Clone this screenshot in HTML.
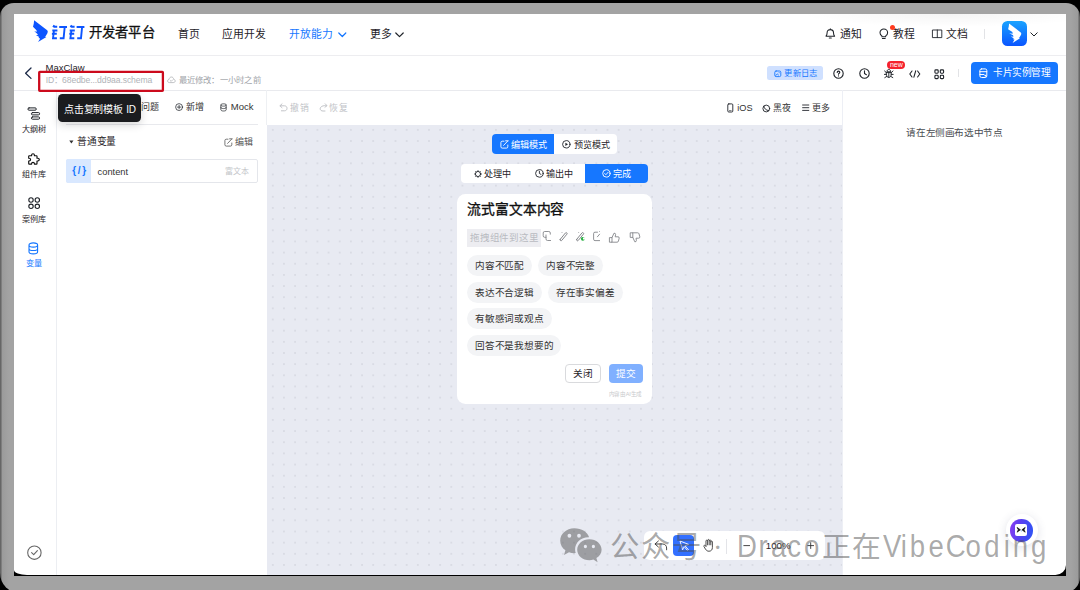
<!DOCTYPE html>
<html lang="zh-CN">
<head>
<meta charset="utf-8">
<title>钉钉开发者平台</title>
<style>
*{box-sizing:border-box;margin:0;padding:0}
html,body{width:1080px;height:590px;overflow:hidden;background:#000;font-family:"Liberation Sans",sans-serif;color:#1f2329}
#bezel{position:absolute;left:0;top:3.3px;width:1080px;height:590px;background:linear-gradient(90deg,#606060 0,#6c6c6c 1px,#9b9b9b 2.3px,#a3a3a3 9px,#a3a3a3 calc(100% - 9px),#9b9b9b calc(100% - 2.3px),#6c6c6c calc(100% - 1px),#606060 100%);border-radius:14px 14px 16px 20px}
#blk{position:absolute;left:14px;top:14px;width:1052px;height:562px;background:#000}
#screen{position:absolute;left:14px;top:14px;width:1052px;height:561px;background:#fff;border-radius:0 0 10.5px 13px/0 0 10px 5px;overflow:hidden}
#pg{position:absolute;left:-14px;top:-14px;width:1080px;height:590px}
#pg div,#pg span,#pg svg{position:absolute}
.t{white-space:nowrap;line-height:1}
.hl{background:#ececee;height:1px}
svg{overflow:visible}
.ic{fill:none;stroke:#1f2329;stroke-width:1;stroke-linecap:round;stroke-linejoin:round}
#canvas{left:267px;top:124.6px;width:575px;height:451px;background-color:#e8eaf2;
 background-image:radial-gradient(circle,#ccced7 0.45px,rgba(204,206,215,0) 0.9px);background-size:11.169px 11.163px;background-position:0.22px -0.72px}
.chip{height:21px;border-radius:10.5px;background:#f3f4f6;font-size:9.6px;letter-spacing:-0.2px;line-height:21px;padding:0 8.1px;color:#333;white-space:nowrap}
</style>
</head>
<body>
<div id="bezel"></div>
<div id="blk"></div>
<div id="screen"><div id="pg">
<div style="left:760px;top:14px;width:306px;height:16px;background:radial-gradient(ellipse 150px 13px at 62% 0,rgba(0,0,0,0.045),rgba(0,0,0,0))"></div>
<div class="hl" style="left:14px;top:54.5px;width:1052px;background:#ededf0"></div>
<svg style="left:0;top:0" width="1080" height="60">
  <path d="M34.1,20.3 L47.2,30.3 Q48.3,31.5 47.4,33.2 L45.6,36.2 L44.6,36.5 L46.4,36.9 L38,42.1 L40.2,38.4 L38.5,38.1 L39.2,37 L35.9,35 L37.8,35.1 L37.5,34 L34.3,31.2 L36.8,31.7 L36.5,30.2 L33,26.7 L33.8,23.5 Z" fill="#0d55ff"/>
</svg>
<svg style="left:0;top:0" width="100" height="60" aria-label="钉钉"><g fill="none" stroke="#0d55ff" stroke-width="1.9" stroke-linejoin="miter">
<path d="M54.4,25.2 L53.2,27.2 M53.6,26.8 L57.2,26.8 M52.3,30.5 L57.4,30.5 M51.9,33.8 L56.8,33.8 M54,30.5 L53,38.2 L56.9,38.2 M59.2,27 L67,27 M64.7,27 L63.6,38.2 L59.8,38.2"/><g transform="translate(17.4,0)"><path d="M54.4,25.2 L53.2,27.2 M53.6,26.8 L57.2,26.8 M52.3,30.5 L57.4,30.5 M51.9,33.8 L56.8,33.8 M54,30.5 L53,38.2 L56.9,38.2 M59.2,27 L67,27 M64.7,27 L63.6,38.2 L59.8,38.2"/></g></g></svg>
<span class="t" style="left:88.5px;top:26.3px;font-size:13.3px;letter-spacing:0.3px;font-weight:500;-webkit-text-stroke:0.3px #111;color:#111">开发者平台</span>
<span class="t" style="left:177.6px;top:29px;font-size:10.8px;color:#1f2329">首页</span>
<span class="t" style="left:222px;top:29px;font-size:10.8px;color:#1f2329">应用开发</span>
<span class="t" style="left:289px;top:29px;font-size:10.8px;color:#1677ff">开放能力</span>
<svg style="left:338px;top:31.5px" width="9" height="6"><path class="ic" d="M0.8,1 L4.3,4.5 L7.8,1" style="stroke:#1677ff;stroke-width:1.2"/></svg>
<span class="t" style="left:369.5px;top:29px;font-size:10.8px;color:#1f2329">更多</span>
<svg style="left:395px;top:31.5px" width="10" height="6"><path class="ic" d="M0.8,1 L4.5,4.6 L8.2,1" style="stroke-width:1.2"/></svg>
<!-- right nav -->
<svg style="left:825.3px;top:27.9px" width="11" height="12"><path class="ic" d="M1,8.2 L9.6,8.2 C8.6,7.2 8.5,6.2 8.5,4.8 C8.5,2.8 7.2,1.6 5.3,1.6 C3.4,1.6 2.1,2.8 2.1,4.8 C2.1,6.2 2,7.2 1,8.2 Z M4.3,10 L6.3,10 M5.3,0.7 L5.3,1.5" style="stroke-width:1.05"/></svg>
<span class="t" style="left:839.5px;top:29px;font-size:10.8px">通知</span>
<svg style="left:879.2px;top:27.6px" width="10" height="12"><path class="ic" d="M4.8,1 C2.6,1 1,2.6 1,4.7 C1,6 1.7,7.2 2.9,7.9 L2.9,8.8 L6.7,8.8 L6.7,7.9 C7.9,7.2 8.6,6 8.6,4.7 C8.6,2.6 7,1 4.8,1 Z M3.4,10.4 L6.2,10.4" style="stroke-width:1.05"/></svg>
<div style="left:890px;top:24.6px;width:5px;height:5px;border-radius:50%;background:#ff3b1f"></div>
<span class="t" style="left:893px;top:29px;font-size:10.8px">教程</span>
<svg style="left:931.5px;top:29px" width="11" height="10"><path class="ic" d="M0.8,1 L9.8,1 L9.8,8.6 L0.8,8.6 Z M5.3,1 L5.3,8.6" style="stroke-width:0.9"/></svg>
<span class="t" style="left:945.7px;top:29px;font-size:10.8px">文档</span>
<div style="left:984px;top:28.5px;width:1px;height:10px;background:#e2e3e6"></div>
<div style="left:1002px;top:21px;width:25px;height:25px;border-radius:5.5px;background:linear-gradient(180deg,#1aa3ff 0%,#0a55ff 100%)"></div>
<svg style="left:1002px;top:21px" width="25" height="25"><path transform="translate(-23.27,-15.57) scale(0.89)" d="M34.1,20.3 L47.2,30.3 Q48.3,31.5 47.4,33.2 L45.6,36.2 L44.6,36.5 L46.4,36.9 L38,42.1 L40.2,38.4 L38.5,38.1 L39.4,36.9 L35.9,35 L39,35.2 L38.6,33.6 L34.3,31.2 L38.2,31.9 L37.8,29.8 L33,26.7 L33.8,23.5 Z" fill="#fff"/></svg>
<svg style="left:1030px;top:31.5px" width="9" height="6"><path class="ic" d="M0.8,0.8 L4,4 L7.2,0.8" style="stroke-width:1"/></svg>

<div class="hl" style="left:14px;top:89.5px;width:1052px;background:#e9eaee"></div>
<svg style="left:23.9px;top:66.5px" width="9" height="13"><path class="ic" d="M7,1 L1.6,6.2 L7,11.4" style="stroke:#1c2a48;stroke-width:1.3"/></svg>
<span class="t" style="left:45.5px;top:62.7px;font-size:9.5px;color:#1f2329">MaxClaw</span>
<span class="t" style="left:45.7px;top:76.2px;font-size:8.6px;color:#b0b3b8;letter-spacing:-0.1px">ID：<span style="position:relative;margin-left:-0.9px">68edbe...dd9aa.schema</span></span>
<svg style="left:166.5px;top:76px" width="9" height="8"><path class="ic" d="M2.2,6.6 C1.2,6.6 0.6,5.8 0.6,5 C0.6,4.1 1.3,3.4 2.1,3.4 C2.2,2 3.2,1 4.4,1 C5.7,1 6.6,2 6.7,3.4 C7.6,3.4 8.2,4.1 8.2,5 C8.2,5.8 7.6,6.6 6.6,6.6 Z M3.3,4.6 L4.2,5.4 L5.6,3.9" style="stroke:#a6a9ae;stroke-width:0.7"/></svg>
<span class="t" style="left:178.6px;top:75.7px;font-size:8.3px;letter-spacing:0.22px;color:#a0a3a8">最近修改：一小时之前</span>
<!-- right tools -->
<div style="left:767px;top:66px;width:55.5px;height:14px;border-radius:2.5px;background:#cfe0ff"></div>
<svg style="left:773.5px;top:69.5px" width="8" height="8"><rect class="ic" x="0.8" y="1" width="6" height="5.6" rx="1.3" style="stroke:#1677ff;stroke-width:0.9"/><path class="ic" d="M1.9,5.4 L3.3,3.9 L4.5,5 M5.1,2.7 L5.2,2.7" style="stroke:#1677ff;stroke-width:0.9"/></svg>
<span class="t" style="left:784.2px;top:68.8px;font-size:8.3px;letter-spacing:0.4px;color:#1677ff">更新日志</span>
<svg style="left:833.2px;top:68px" width="11" height="11"><circle class="ic" cx="5.5" cy="5.5" r="4.7" style="stroke-width:1.1"/><path class="ic" d="M4.2,4.4 C4.2,3.5 4.8,3.1 5.5,3.1 C6.2,3.1 6.8,3.6 6.8,4.3 C6.8,5.2 5.5,5.3 5.5,6.3 M5.5,7.7 L5.5,7.9" style="stroke-width:1.1"/></svg>
<svg style="left:858.5px;top:68px" width="11" height="11"><circle class="ic" cx="5.5" cy="5.5" r="4.7" style="stroke-width:1.1"/><path class="ic" d="M5.5,2.8 L5.5,5.6 L7.4,6.7" style="stroke-width:1.1"/></svg>
<svg style="left:883.8px;top:68.3px" width="10" height="11"><path class="ic" d="M3,3.4 C3,2.2 3.8,1.4 4.8,1.4 C5.8,1.4 6.6,2.2 6.6,3.4 Z M2.4,4.6 L7.2,4.6 L7.2,6.6 C7.2,8.2 6.2,9.4 4.8,9.4 C3.4,9.4 2.4,8.2 2.4,6.6 Z M0.6,3 L2.4,4.6 M9,3 L7.2,4.6 M0.4,6.4 L2.4,6.4 M9.2,6.4 L7.2,6.4 M0.8,9.6 L2.8,8.4 M8.8,9.6 L6.8,8.4 M4.8,4.6 L4.8,9.2" style="stroke-width:0.95"/></svg>
<div style="left:887.4px;top:60.5px;width:17.2px;height:8.2px;border-radius:4.1px;background:#f5222d"></div>
<span class="t" style="left:889.9px;top:60.6px;font-size:7px;color:#fff">new</span>
<svg style="left:908.5px;top:69.5px" width="12" height="8"><path class="ic" d="M3,1 L0.8,4 L3,7 M8.6,1 L10.8,4 L8.6,7 M6.7,0.8 L4.9,7.2" style="stroke-width:1.1"/></svg>
<svg style="left:934px;top:68.5px" width="11" height="11"><rect class="ic" x="0.9" y="0.9" width="3.3" height="3.3" rx="0.9" style="stroke-width:1.1"/><rect class="ic" x="6.3" y="0.9" width="3.3" height="3.3" rx="0.9" style="stroke-width:1.1"/><rect class="ic" x="0.9" y="6.3" width="3.3" height="3.3" rx="0.9" style="stroke-width:1.1"/><rect class="ic" x="6.3" y="6.3" width="3.3" height="3.3" rx="0.9" style="stroke-width:1.1"/></svg>
<div style="left:958px;top:69px;width:1px;height:8px;background:#e2e3e6"></div>
<div style="left:971px;top:62px;width:86.5px;height:22px;border-radius:4px;background:#1677ff"></div>
<svg style="left:979.4px;top:67.8px" width="9" height="11"><g class="ic" style="stroke:#fff;stroke-width:1"><rect x="0.9" y="0.9" width="6.9" height="8.6" rx="1.6"/><path d="M0.9,3.7 L7.8,3.7 M0.9,6.5 L5,6.5"/><circle cx="6.3" cy="7.7" r="0.5" fill="#fff"/></g></svg>
<span class="t" style="left:993px;top:68.2px;font-size:9.7px;letter-spacing:-0.5px;color:#fff">卡片实例管理</span>

<div style="left:56px;top:90px;width:1px;height:485px;background:#eceef2"></div>
<svg style="left:27px;top:106.5px" width="14" height="14"><g class="ic" style="stroke-width:1"><rect x="0.9" y="0.9" width="8.4" height="2.3" rx="1.15"/><rect x="4.4" y="5.6" width="8.2" height="2.3" rx="1.15"/><rect x="4.4" y="9.9" width="8.2" height="2.3" rx="1.15"/></g></svg>
<span class="t" style="left:21.8px;top:126.3px;font-size:8.1px;color:#1f2329">大纲树</span>
<svg style="left:26px;top:151px" width="16" height="16"><path class="ic" d="M3.3,4.7 L5.6,4.7 L5.6,4.1 C5.6,3.2 6.2,2.7 7,2.7 C7.8,2.7 8.4,3.2 8.4,4.1 L8.4,4.7 L10.4,4.7 Q11,4.7 11,5.3 L11,7.2 L11.8,7.2 C12.7,7.2 13.3,7.8 13.3,8.6 C13.3,9.4 12.7,10 11.8,10 L11,10 L11,12.5 Q11,13.1 10.4,13.1 L8.4,13.1 L8.4,12.6 C8.4,11.8 7.8,11.3 7,11.3 C6.2,11.3 5.6,11.8 5.6,12.6 L5.6,13.1 L3.3,13.1 Q2.7,13.1 2.7,12.5 L2.7,10 L3.2,10 C4,10 4.6,9.4 4.6,8.6 C4.6,7.8 4,7.2 3.2,7.2 L2.7,7.2 L2.7,5.3 Q2.7,4.7 3.3,4.7 Z" style="stroke:#111;stroke-width:1.15"/></svg>
<span class="t" style="left:21.8px;top:171.1px;font-size:8.1px;color:#1f2329">组件库</span>
<svg style="left:27.5px;top:197.4px" width="13" height="13"><g class="ic" style="stroke-width:1.1"><circle cx="3" cy="3" r="2.2"/><circle cx="9.3" cy="3" r="2.2"/><circle cx="3" cy="9.3" r="2.2"/><circle cx="9.3" cy="9.3" r="2.2"/></g></svg>
<span class="t" style="left:21.8px;top:215.6px;font-size:8.1px;color:#1f2329">案例库</span>
<svg style="left:28.3px;top:242.2px" width="11" height="13"><path class="ic" d="M1,3 C1,1.8 2.8,0.9 5.3,0.9 C7.8,0.9 9.6,1.8 9.6,3 L9.6,9.8 C9.6,11 7.8,11.9 5.3,11.9 C2.8,11.9 1,11 1,9.8 Z M1,3 C1,4.2 2.8,5.1 5.3,5.1 C7.8,5.1 9.6,4.2 9.6,3 M1,6.4 C1,7.6 2.8,8.5 5.3,8.5 C7.8,8.5 9.6,7.6 9.6,6.4" style="stroke:#1677ff;stroke-width:1.1"/></svg>
<span class="t" style="left:25.8px;top:260.4px;font-size:8.1px;color:#1677ff">变量</span>
<svg style="left:26.5px;top:545px" width="15" height="15"><circle class="ic" cx="7.4" cy="7.7" r="6.7" style="stroke:#666;stroke-width:1.1"/><path class="ic" d="M4.6,7.7 L6.7,9.6 L10.4,5.6" style="stroke:#666;stroke-width:1.1"/></svg>

<div style="left:266px;top:90px;width:1px;height:35px;background:#eef0f3"></div>
<span class="t" style="left:141px;top:103.1px;font-size:9px;color:#333">问题</span>
<svg style="left:174.6px;top:103.1px" width="8.2" height="8.2" viewBox="0 0 9 9"><circle class="ic" cx="4.5" cy="4.5" r="3.8" style="stroke-width:0.8"/><path class="ic" d="M4.5,2.6 L4.5,6.4 M2.6,4.5 L6.4,4.5" style="stroke-width:0.8"/></svg>
<span class="t" style="left:185.5px;top:103.1px;font-size:9px;color:#333">新增</span>
<svg style="left:219.8px;top:102.8px" width="7.2" height="9" viewBox="0 0 8 10"><path class="ic" d="M0.9,2.2 C0.9,1.4 2.2,0.9 3.9,0.9 C5.6,0.9 6.9,1.4 6.9,2.2 L6.9,7.6 C6.9,8.4 5.6,8.9 3.9,8.9 C2.2,8.9 0.9,8.4 0.9,7.6 Z M0.9,2.2 C0.9,3 2.2,3.5 3.9,3.5 C5.6,3.5 6.9,3 6.9,2.2 M0.9,4.9 C0.9,5.7 2.2,6.2 3.9,6.2 C5.6,6.2 6.9,5.7 6.9,4.9" style="stroke-width:0.8"/></svg>
<span class="t" style="left:230.8px;top:102.2px;font-size:9.5px;color:#333">Mock</span>
<div style="left:66px;top:124px;width:192px;height:1px;background:#e8e9ed"></div>
<svg style="left:68.8px;top:140.4px" width="5" height="4"><path d="M0.3,0.4 L4.5,0.4 L2.4,3.4 Z" fill="#333"/></svg>
<span class="t" style="left:77px;top:137.3px;font-size:9.7px;letter-spacing:-0.2px;color:#1f2329">普通变量</span>
<svg style="left:223.8px;top:137.6px" width="9" height="9"><path class="ic" d="M4,1.2 L2.2,1.2 C1.4,1.2 0.9,1.7 0.9,2.5 L0.9,6.8 C0.9,7.6 1.4,8.1 2.2,8.1 L6.5,8.1 C7.3,8.1 7.8,7.6 7.8,6.8 L7.8,5 M3.6,5.4 L7.6,1.2 M5.6,0.8 L8.2,0.8" style="stroke:#555;stroke-width:0.8"/></svg>
<span class="t" style="left:234.8px;top:137.8px;font-size:9px;color:#555">编辑</span>
<div style="left:66px;top:159px;width:192px;height:24px;border:1px solid #e4e6eb;border-radius:2px;background:#fff"></div>
<div style="left:66px;top:159px;width:25px;height:24px;border-radius:2px 0 0 2px;background:#d9e8ff"></div>
<span class="t" style="left:72.2px;top:166.4px;font-size:10px;font-weight:bold;color:#1677ff;letter-spacing:1.7px">{/}</span>
<span class="t" style="left:97.6px;top:167.6px;font-size:9.3px;color:#333">content</span>
<span class="t" style="left:224.6px;top:168px;font-size:8px;color:#c4c6ca">富文本</span>

<svg style="left:279px;top:103.4px" width="9" height="9"><path class="ic" d="M3,0.9 L0.9,2.8 L3,4.7 M1.2,2.8 L5.4,2.8 C7,2.8 8,3.8 8,5.3 C8,6.8 7,7.8 5.4,7.8 L2.4,7.8" style="stroke:#c2c4c8;stroke-width:1"/></svg>
<span class="t" style="left:290.4px;top:104.2px;font-size:8.8px;letter-spacing:0.4px;color:#c2c4c8">撤销</span>
<svg style="left:318.5px;top:103.4px" width="9" height="9"><path class="ic" d="M6.2,0.8 L8,2.6 L6,4.2 M7.6,2.7 C4,2.2 1.2,3.6 1.2,5.8 C1.2,7.2 2.4,8 4,8 L6,8" style="stroke:#c2c4c8;stroke-width:1"/></svg>
<span class="t" style="left:329.4px;top:104.2px;font-size:8.8px;letter-spacing:0.4px;color:#c2c4c8">恢复</span>
<svg style="left:727px;top:102.5px" width="7" height="11"><rect class="ic" x="0.8" y="0.9" width="5" height="8.1" rx="1" style="stroke-width:0.9"/><path class="ic" d="M2.4,7.6 L4.2,7.6" style="stroke-width:0.6"/></svg>
<span class="t" style="left:737.3px;top:104.2px;font-size:9.2px;color:#333">iOS</span>
<svg style="left:762px;top:104.2px" width="9" height="9"><circle class="ic" cx="4.3" cy="4.5" r="3.4" style="stroke-width:0.9"/><path class="ic" d="M1.9,2.3 C2.2,4.6 4,6.4 6.6,6.6" style="stroke-width:0.9"/></svg>
<span class="t" style="left:773px;top:104.2px;font-size:8.9px;color:#333">黑夜</span>
<svg style="left:802px;top:104.2px" width="8" height="8"><path class="ic" d="M0.6,1 L6.8,1 M0.6,3.7 L6.8,3.7 M0.6,6.4 L6.8,6.4" style="stroke-width:0.9"/></svg>
<span class="t" style="left:812px;top:104.2px;font-size:8.9px;color:#333">更多</span>

<div id="canvas"></div>
<!-- mode toggle -->
<div style="left:491.8px;top:134.2px;width:125.6px;height:19.8px;border-radius:4px;background:#fff"></div>
<div style="left:491.8px;top:134.2px;width:62.6px;height:19.8px;border-radius:4px 0 0 4px;background:#1677ff"></div>
<svg style="left:500px;top:139.9px" width="9" height="9"><path class="ic" d="M4,1.2 L2.2,1.2 C1.4,1.2 0.9,1.7 0.9,2.5 L0.9,6.8 C0.9,7.6 1.4,8.1 2.2,8.1 L6.5,8.1 C7.3,8.1 7.8,7.6 7.8,6.8 L7.8,5 M3.6,5.4 L7.6,1.2 M5.6,0.8 L8.2,0.8" style="stroke:#fff;stroke-width:0.9"/></svg>
<span class="t" style="left:511px;top:140.5px;font-size:9.1px;color:#fff">编辑模式</span>
<svg style="left:562.4px;top:140.2px" width="9" height="9"><circle class="ic" cx="4.3" cy="4.3" r="3.7" style="stroke-width:0.9"/><path d="M3.4,2.7 L6,4.3 L3.4,5.9 Z" fill="#1f2329"/></svg>
<span class="t" style="left:573.6px;top:140.5px;font-size:9.1px;color:#1f2329">预览模式</span>
<!-- state toggle -->
<div style="left:461.2px;top:163.7px;width:186.8px;height:19.4px;border-radius:4px;background:#fff"></div>
<div style="left:585px;top:163.7px;width:63px;height:19.4px;border-radius:0 4px 4px 0;background:#1677ff"></div>
<svg style="left:473.6px;top:169.6px" width="8" height="8"><circle class="ic" cx="4" cy="4" r="2.6" style="stroke-width:0.9"/><path class="ic" d="M4,0.4 L4,1.2 M4,6.8 L4,7.6 M0.4,4 L1.2,4 M6.8,4 L7.6,4 M1.5,1.5 L2,2 M6,6 L6.5,6.5 M1.5,6.5 L2,6 M6,2 L6.5,1.5" style="stroke-width:0.7"/></svg>
<span class="t" style="left:484.1px;top:169.8px;font-size:9.1px;color:#1f2329">处理中</span>
<svg style="left:535.2px;top:169.1px" width="9" height="9"><circle class="ic" cx="4.4" cy="4.4" r="3.8" style="stroke-width:0.9"/><path class="ic" d="M4.4,2.2 L4.4,4.5 L6,5.4" style="stroke-width:0.9"/></svg>
<span class="t" style="left:546.2px;top:169.8px;font-size:9.1px;color:#1f2329">输出中</span>
<svg style="left:602.4px;top:169.1px" width="9" height="9"><circle class="ic" cx="4.4" cy="4.4" r="3.7" style="stroke:#fff;stroke-width:0.9"/><path class="ic" d="M2.7,4.5 L3.9,5.7 L6.2,3.2" style="stroke:#fff;stroke-width:0.9"/></svg>
<span class="t" style="left:613.1px;top:169.8px;font-size:9.1px;color:#fff">完成</span>
<!-- card -->
<div style="left:457px;top:194px;width:195.3px;height:209.8px;border-radius:8.5px;background:#fff"></div>
<span class="t" style="left:467.4px;top:203.2px;font-size:13.75px;letter-spacing:-0.17px;font-weight:500;-webkit-text-stroke:0.35px #111;color:#111">流式富文本内容</span>
<div style="left:466.7px;top:228.8px;width:74px;height:18px;background:#ededf1"></div>
<span class="t" style="left:470px;top:233px;font-size:9.5px;letter-spacing:-0.23px;color:#b9bbc1">拖拽组件到这里</span>
<svg style="left:538px;top:224px" width="110" height="26"><g class="ic" style="stroke:#7d7f84;stroke-width:0.85">
<path d="M12.3,10.2 L12.3,9 Q12.3,7.5 10.8,7.5 L6.7,7.5 Q5.2,7.5 5.2,9 L5.2,11.8 Q5.2,13.3 6.7,13.3 L8,13.3 M8,11 L8,15 Q8,16.5 9.5,16.5 L12.6,16.5"/>
<rect x="-5" y="-0.95" width="10" height="1.9" rx="0.95" transform="translate(25.6,12.7) rotate(-50.7)"/><path d="M24.1,8.6 L24.2,8.7"/>
<rect x="-5" y="-0.95" width="10" height="1.9" rx="0.95" transform="translate(42.1,12.7) rotate(-50.7)"/><path d="M40.5,8.4 L40.6,8.5"/>
<path d="M59.5,8.2 L57,8.2 Q55.6,8.2 55.6,9.6 L55.6,15.2 Q55.6,16.6 57,16.6 L61.6,16.6 M59.4,12.8 L61.6,10.2 M61.4,7.4 L61.5,7.5"/>
<path d="M71.8,13.6 L74,13.6 L74,18.2 L71.8,18.2 Z M74,13.6 L76,9.2 Q77.6,9 77.6,10.6 L77.2,12.8 L80,12.8 Q81.4,12.8 81.2,14.2 L80.4,17.2 Q80.2,18.2 79,18.2 L74,18.2"/>
<path d="M92.6,8.8 L94.8,8.8 L94.8,13.4 L92.6,13.4 Z M94.8,13.4 L96.8,17.8 Q98.4,18 98.4,16.4 L98,14.2 L100.6,14.2 Q102,14.2 101.8,12.8 L101,9.8 Q100.8,8.8 99.6,8.8 L94.8,8.8"/>
</g><circle cx="44.8" cy="14.8" r="1.9" fill="#1fae3a"/><circle cx="45.9" cy="14.6" r="1.1" fill="#fff"/></svg>
<span class="chip" style="left:466.9px;top:255.2px">内容不匹配</span>
<span class="chip" style="left:538px;top:255.2px">内容不完整</span>
<span class="chip" style="left:466.9px;top:281.7px">表达不合逻辑</span>
<span class="chip" style="left:547.8px;top:281.7px">存在事实偏差</span>
<span class="chip" style="left:466.9px;top:308.1px">有敏感词或观点</span>
<span class="chip" style="left:466.9px;top:334.8px">回答不是我想要的</span>
<div style="left:564.5px;top:364px;width:36.2px;height:19px;border:1px solid #d9dadd;border-radius:4px;background:#fff"></div>
<span class="t" style="left:572.9px;top:368.6px;font-size:9.66px;color:#1f2329">关闭</span>
<div style="left:608.9px;top:364px;width:33.7px;height:19px;border-radius:4px;background:#80b0ff"></div>
<span class="t" style="left:616.1px;top:368.6px;font-size:9.66px;color:#fff">提交</span>
<span class="t" style="left:608.6px;top:392.3px;font-size:5.5px;letter-spacing:-0.25px;color:#c8c9cc">内容由AI生成</span>

<div style="left:842px;top:90px;width:1px;height:485px;background:#edeff5"></div>
<span class="t" style="left:906.3px;top:127.6px;font-size:9.6px;letter-spacing:-0.36px;color:#4a4d52">请在左侧画布选中节点</span>

<div style="left:644px;top:531.4px;width:180.5px;height:28.2px;border-radius:6px;background:#fff"></div>
<svg style="left:653.5px;top:540px" width="14" height="11"><path class="ic" d="M4.4,1 L1,4 L4.4,7 M1.2,4 L8.6,4 C11,4 12.6,5.6 12.6,8 L12.6,9.8" style="stroke:#333;stroke-width:0.9"/></svg>
<div style="left:673.4px;top:534.9px;width:20.8px;height:20.9px;border-radius:4px;background:#3370ff"></div>
<svg style="left:678.5px;top:539.5px" width="12" height="12"><path d="M1,1 L9.6,4.4 L6,5.8 L9.4,9.6 L8.4,10.4 L5.2,6.6 L3.6,9.8 Z" fill="none" stroke="#fff" stroke-width="0.9" stroke-linejoin="round"/></svg>
<svg style="left:702.8px;top:537.6px" width="11" height="13" viewBox="0 0 9.6 11.4" preserveAspectRatio="none"><path class="ic" d="M2.6,7 L2.6,2.6 C2.6,1.6 4,1.6 4,2.6 L4,6 M4,2 C4,1 5.4,1 5.4,2 L5.4,6 M5.4,2.4 C5.4,1.4 6.8,1.4 6.8,2.4 L6.8,6 M6.8,3.4 C6.8,2.4 8.2,2.4 8.2,3.4 L8.2,8.4 C8.2,10.4 7,11.6 5.2,11.6 C3.8,11.6 3,11 2.2,9.8 L0.8,7.4 C0.4,6.6 1.4,6 2,6.6 L2.6,7.4" style="stroke:#333;stroke-width:0.75"/></svg>
<div style="left:726px;top:538.5px;width:1px;height:15px;background:#e3e4e8"></div>
<svg style="left:742.5px;top:541px" width="8" height="9"><path class="ic" d="M0.8,4.6 L6.6,4.6" style="stroke:#333;stroke-width:0.9"/></svg>
<span class="t" style="left:765.8px;top:540.7px;font-size:9.7px;color:#1f2329">100%</span>
<svg style="left:807px;top:541px" width="8" height="9"><path class="ic" d="M0.8,4.6 L6.6,4.6 M3.7,1.7 L3.7,7.5" style="stroke:#333;stroke-width:0.9"/></svg>
<!-- float button -->
<div style="left:1005.5px;top:514px;width:32px;height:32px;border-radius:50%;background:#fff;box-shadow:0 2px 10px rgba(60,70,110,0.16)"></div>
<div style="left:1010.2px;top:519px;width:22.6px;height:22.6px;border-radius:50%;background:linear-gradient(100deg,#8e3cf2 0%,#5a3ff0 40%,#2a55f6 100%)"></div>
<div style="left:1015px;top:524.4px;width:12.3px;height:11.8px;border-radius:2px;background:#fff"></div>
<svg style="left:1015px;top:524.4px" width="13" height="12"><path d="M2.1,3.4 L5.4,5.8 L2.1,8.2 L3.3,5.8 Z M10.2,3.4 L6.9,5.8 L10.2,8.2 L9,5.8 Z" fill="#111" stroke="#111" stroke-width="0.7" stroke-linejoin="round"/><path d="M5.7,6.6 L6.15,7.9 L6.6,6.6 Z" fill="#2f7cf6"/></svg>

<svg style="left:0;top:0" width="200" height="100"><rect x="39.2" y="71.85" width="123.7" height="19.1" rx="0.6" fill="none" stroke="#cc0a1c" stroke-width="2.3"/></svg>
<div style="left:57.8px;top:94.2px;width:83.4px;height:27.6px;border-radius:4.5px;background:#1b1c1f;box-shadow:0 3px 8px rgba(0,0,0,0.16)"></div>
<span class="t" style="left:64.2px;top:104.6px;font-size:10px;letter-spacing:-0.3px;word-spacing:1.4px;color:#fff">点击复制模板 ID</span>

<svg style="left:556px;top:524px" width="52" height="44"><g fill="rgba(76,76,76,0.48)" transform="translate(0,4.2) scale(1,1.075) translate(0,-4.2)">
<path fill-rule="evenodd" d="M18.2,4.2 C10.4,4.2 4.2,9.4 4.2,15.8 C4.2,19.4 6.2,22.6 9.4,24.8 L8,29.2 L13,26.6 C14.6,27.1 16.4,27.4 18.2,27.4 C18.7,27.4 19.2,27.4 19.7,27.3 C19.3,26.2 19.1,25.1 19.1,23.9 C19.1,17.6 25,12.6 32.2,12.6 C32.5,12.6 32.8,12.6 33.1,12.6 C31.8,7.8 25.6,4.2 18.2,4.2 Z M13.4,9.4 A1.9,1.9 0 1 0 13.4,13.2 A1.9,1.9 0 1 0 13.4,9.4 Z M23,9.4 A1.9,1.9 0 1 0 23,13.2 A1.9,1.9 0 1 0 23,9.4 Z"/>
<path fill-rule="evenodd" d="M33.4,14.4 C26.6,14.4 21.2,18.8 21.2,24.2 C21.2,29.6 26.6,34 33.4,34 C34.8,34 36.2,33.8 37.4,33.4 L41.6,35.8 L40.4,32 C43.6,30.2 45.6,27.4 45.6,24.2 C45.6,18.8 40.2,14.4 33.4,14.4 Z M29.4,19.6 A1.6,1.6 0 1 0 29.4,22.8 A1.6,1.6 0 1 0 29.4,19.6 Z M37.4,19.6 A1.6,1.6 0 1 0 37.4,22.8 A1.6,1.6 0 1 0 37.4,19.6 Z"/>
</g></svg>
<span class="t" style="left:609.6px;top:532.1px;font-size:29.4px;letter-spacing:2.2px;color:rgba(76,76,76,0.48)">公众号</span>
<span class="t" style="left:715.6px;top:542px;font-size:12.6px;color:rgba(76,76,76,0.48)">•</span>
<span class="t" style="left:736.8px;top:530.8px;font-size:30.6px;color:rgba(76,76,76,0.48);transform:scaleX(0.9);transform-origin:0 0"><span style="position:static;letter-spacing:1.92px">D</span><span style="position:static;letter-spacing:3.45px">r</span><span style="position:static;letter-spacing:1.2px">a</span><span style="position:static;letter-spacing:3.24px">c</span><span style="position:static;letter-spacing:0px">o</span></span>
<span class="t" style="left:822.1px;top:532.5px;font-size:28.8px;letter-spacing:1.1px;color:rgba(76,76,76,0.48)">正在</span>
<span class="t" style="left:882.8px;top:530.8px;font-size:30.6px;color:rgba(76,76,76,0.48);transform:scaleX(0.9);transform-origin:0 0"><span style="position:static;letter-spacing:-0.55px">V</span><span style="position:static;letter-spacing:3.09px">i</span><span style="position:static;letter-spacing:3.68px">b</span><span style="position:static;letter-spacing:2.13px">e</span><span style="position:static;letter-spacing:-0.08px">C</span><span style="position:static;letter-spacing:3.85px">o</span><span style="position:static;letter-spacing:4.73px">d</span><span style="position:static;letter-spacing:2.98px">i</span><span style="position:static;letter-spacing:3.36px">n</span><span style="position:static;letter-spacing:0px">g</span></span>

</div></div>
</body>
</html>
